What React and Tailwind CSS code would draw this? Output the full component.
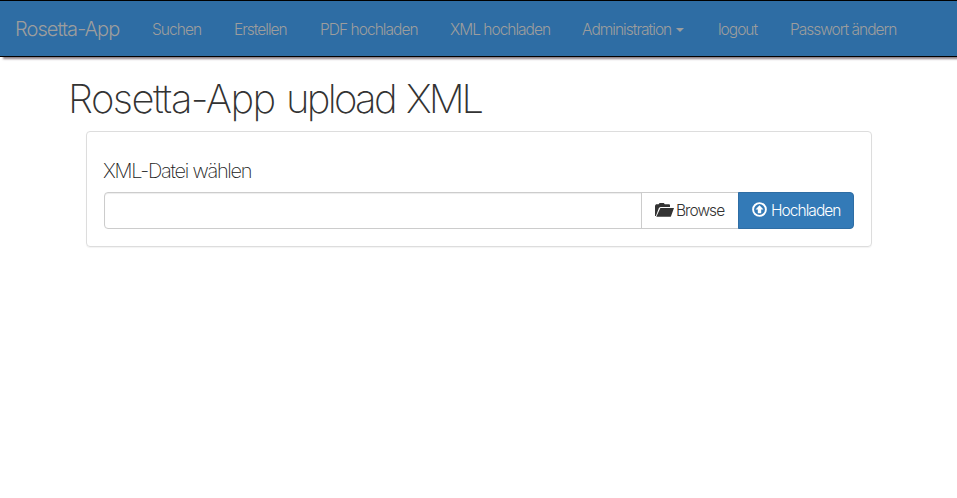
const NAV_ITEMS = [
  { label: 'Suchen', box: 'w-[82px]', text: 'tracking-[-0.95px]' },
  { label: 'Erstellen', box: 'w-[86px]', text: 'tracking-[-1px]' },
  { label: 'PDF hochladen', box: 'w-[130px]', text: 'tracking-[-0.95px]' },
  { label: 'XML hochladen', box: 'w-[132px]', text: 'tracking-[-1px]' },
  { label: 'Administration', box: 'w-[136px]', text: 'tracking-[-0.97px]', caret: true },
  { label: 'logout', box: 'w-[72px]', text: 'tracking-[-1px]' },
  { label: 'Passwort ändern', box: 'w-[139px]', text: 'tracking-[-1px]' },
];

function FolderOpenIcon() {
  return (
    <svg className="-mt-0.5 h-[14px] w-[19px] shrink-0" viewBox="0 0 19 14" fill="#333">
      <path d="M0 13V2.8L1 1.3h2.6L4.6 0h4.2l1 1.3H14a1 1 0 0 1 1 1V4H5.6L4 4.8 0.9 13Z" />
      <path d="M5.4 5H19l-3 8.2a.9.9 0 0 1-.9.6H1.3Z" />
    </svg>
  );
}

function UploadIcon() {
  return (
    <svg className="-mt-0.5 h-[15px] w-[15px] shrink-0" viewBox="0 0 15 15">
      <circle cx="7.5" cy="7.5" r="6.4" fill="none" stroke="#fff" strokeWidth="1.9" />
      <path d="M7.5 3.2 11.5 7.6H9.2V11.2H5.8V7.6H3.5Z" fill="#fff" />
    </svg>
  );
}

export default function App() {
  return (
    <div className="h-[498px] w-full overflow-hidden bg-white font-['Inter','Liberation_Sans',sans-serif] text-base font-extralight text-[#333]">
      <nav className="flex h-[57px] items-center whitespace-nowrap border-y border-black bg-[#2e6da4] text-[#9d9d9d] shadow-[3px_2px_2px_rgba(60,40,50,0.6)]">
        <a className="w-[136px] pl-[15px] text-xl font-light leading-5 tracking-[-0.95px]">Rosetta-App</a>
        {NAV_ITEMS.map((item) => (
          <a key={item.label} className={`flex items-center pl-4 pt-0.5 text-[15.5px] font-light leading-5 ${item.box}`}>
            <span className={item.text}>{item.label}</span>
            {item.caret && (
              <span className="ml-[5px] mt-px border-x-4 border-t-4 border-x-transparent border-t-[#9d9d9d]" />
            )}
          </a>
        ))}
      </nav>
      <main className="ml-[70px] mt-5 w-[818px]">
        <h1 className="-ml-0.5 h-[54px] whitespace-nowrap text-[40px] leading-[44px]">
          <span className="tracking-[-1.55px]">Rosetta-App</span>{' '}
          <span className="tracking-[-2.7px]">upload</span>{' '}
          <span className="tracking-[-3px]">XML</span>
        </h1>
        <section className="ml-4 h-[116px] w-[786px] rounded border border-[#ddd] px-[17px] pt-7 shadow-[0_1px_1px_rgba(0,0,0,0.05)]">
          <label className="-ml-px block h-8 text-xl font-extralight leading-[22px] tracking-[-1.25px] text-[#222]">XML-Datei wählen</label>
          <div className="flex h-[37px] w-[750px]">
            <input
              readOnly
              className="w-[538px] rounded-l border border-[#ccc] shadow-[inset_0_1px_1px_rgba(0,0,0,0.075)] outline-none"
            />
            <button className="-ml-px flex w-[98px] items-center border border-[#ccc] bg-white pl-[13px] text-[15.5px] font-light">
              <FolderOpenIcon />
              <span className="ml-[2px] mt-px tracking-[-0.95px]">Browse</span>
            </button>
            <button className="-ml-px flex w-[116px] items-center rounded-r border border-[#2e6da4] bg-[#337ab7] pl-[13px] text-[15.5px] font-light text-white">
              <UploadIcon />
              <span className="ml-[4px] mt-px tracking-[-0.95px]">Hochladen</span>
            </button>
          </div>
        </section>
      </main>
    </div>
  );
}
